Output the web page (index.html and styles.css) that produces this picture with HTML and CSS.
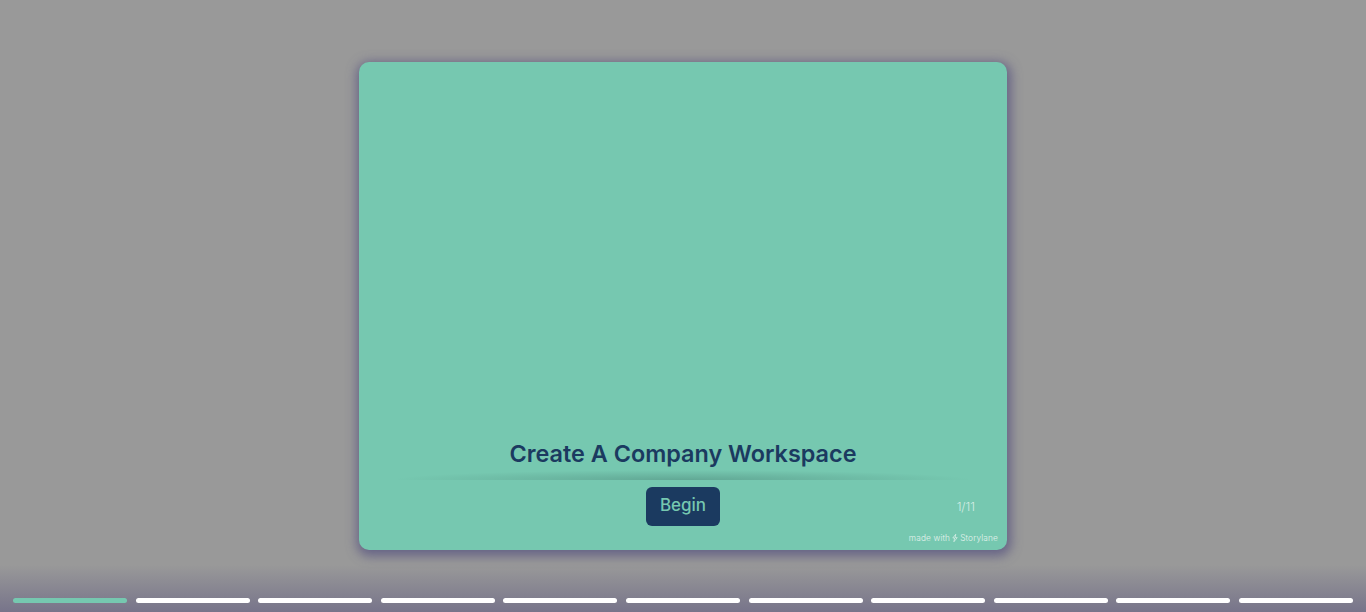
FILE: index.html
```html
<!DOCTYPE html>
<html lang="en">
<head>
<meta charset="utf-8">
<title>Create A Company Workspace</title>
<link rel="stylesheet" href="styles.css">
</head>
<body>
<main class="stage">
  <section class="card">
    <div class="card-spacer"></div>
    <h1 class="title">Create A Company Workspace</h1>
    <div class="divider"></div>
    <div class="actions">
      <button class="begin" type="button">Begin</button>
      <span class="count">1/11</span>
    </div>
    <div class="credit">made with
      <svg class="bolt" viewBox="0 0 8 10" width="6" height="8" aria-hidden="true"><path d="M5 0 1 5h2.500L2.500 10 7 4.500H4.200z" fill="none" stroke="#e8f4f0" stroke-width="0.900"/></svg>
      Storylane</div>
  </section>
</main>
<footer class="progress">
  <div class="bar bar-active"></div>
  <div class="bar"></div>
  <div class="bar"></div>
  <div class="bar"></div>
  <div class="bar"></div>
  <div class="bar"></div>
  <div class="bar"></div>
  <div class="bar"></div>
  <div class="bar"></div>
  <div class="bar"></div>
  <div class="bar"></div>
</footer>
</body>
</html>
```
FILE: styles.css
```css
* { box-sizing: border-box; }
html, body { margin: 0; height: 100%; }
body {
  width: 1366px;
  height: 612px;
  overflow: hidden;
  background: #999999;
  font-family: "Inter", "Noto Sans", sans-serif;
  display: flex;
  flex-direction: column;
}
.stage {
  height: 565px;
  padding-top: 62px;
  display: flex;
  justify-content: center;
  align-items: flex-start;
}
.card {
  width: 648px;
  height: 488px;
  background: #76c8b0;
  border-radius: 10px;
  box-shadow: 1px 3px 11px 3px rgba(80, 76, 125, 0.7);
  display: flex;
  flex-direction: column;
  align-items: center;
}
.card-spacer { height: 376px; flex: none; }
.title {
  margin: 0;
  height: 32px;
  font-size: 23.4px;
  line-height: 32px;
  font-weight: 600;
  color: #1b3a60;
  white-space: nowrap;
}
.divider {
  width: 580px;
  height: 10px;
  background: radial-gradient(ellipse 50% 100% at 50% 100%, rgba(60, 110, 100, 0.36), rgba(60, 110, 100, 0) 100%);
}
.actions {
  position: relative;
  width: 100%;
  height: 39px;
  margin-top: 7px;
  display: flex;
  justify-content: center;
}
.begin {
  width: 74px;
  height: 39px;
  padding: 0 0 4px;
  border: 0;
  border-radius: 6px;
  background: #1b3a60;
  color: #76c8b0;
  font-family: inherit;
  font-size: 17px;
  font-weight: 450;
}
.count {
  position: absolute;
  right: 32px;
  top: 10px;
  font-size: 12px;
  line-height: 20px;
  color: #d4ece4;
  font-weight: 300;
}
.credit {
  align-self: flex-end;
  margin-top: 6px;
  margin-right: 9px;
  font-size: 8.300px;
  letter-spacing: 0.150px;
  line-height: 12px;
  font-weight: 300;
  color: #e4f3ee;
  display: flex;
  align-items: center;
  gap: 2px;
  white-space: nowrap;
}
.bolt { flex: none; }
.progress {
  flex: 1;
  padding: 33px 13px 0;
  display: flex;
  gap: 8.600px;
  align-items: flex-start;
  background: linear-gradient(to bottom, rgba(119, 116, 138, 0), #77748a);
}
.bar {
  flex: 1;
  height: 5px;
  border-radius: 3px;
  background: #ffffff;
}
.bar-active { background: #76c8b0; }
```
